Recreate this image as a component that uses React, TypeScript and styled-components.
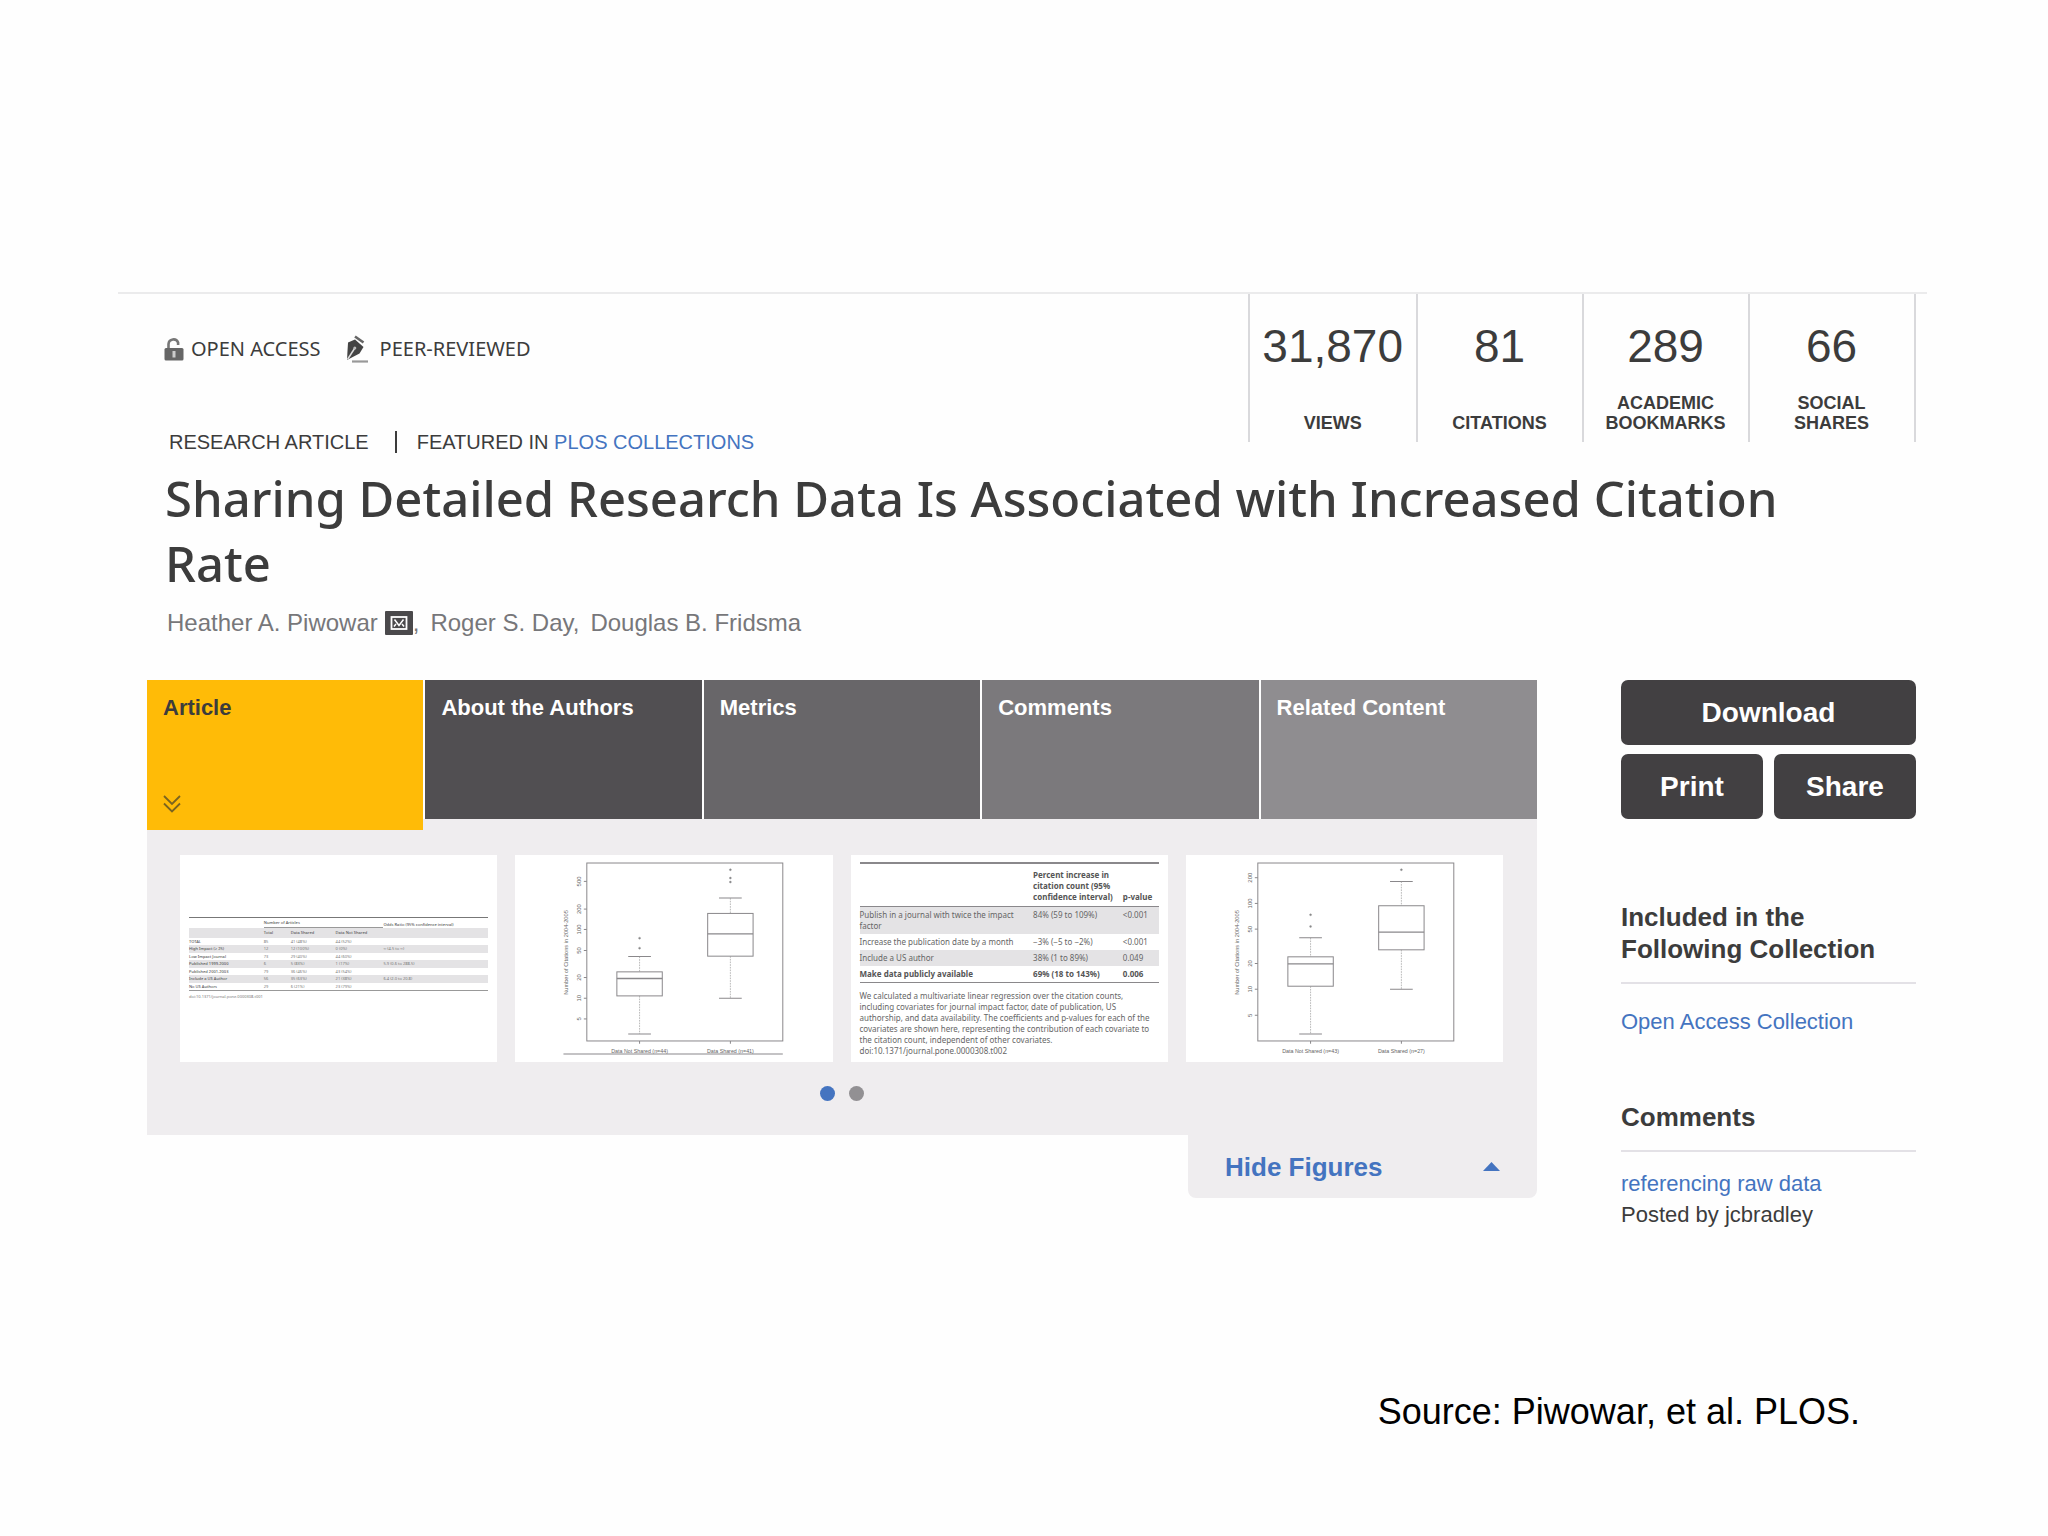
import React from "react";
import styled, { createGlobalStyle } from "styled-components";

const sans = `"Liberation Sans", Arial, sans-serif`;
const humanist = `"Noto Sans", "Open Sans", sans-serif`;
const ink = "#3c3c3c";
const blue = "#4474c0";
const panel = "#efedef";

const GlobalStyle = createGlobalStyle`
  *, *::before, *::after { box-sizing: border-box; }
  body { margin: 0; background: #fefefe; color: ${ink}; font-family: ${sans}; }
  h1, h2, p, figure, ul, dl, dd { margin: 0; padding: 0; }
`;

const Page = styled.div`
  padding: 292px 121px 80px 118px;
`;

const Header = styled.header`
  display: flex;
  justify-content: space-between;
  align-items: flex-start;
  border-top: 2px solid #ebebec;
  padding: 0 11px 0 46px;
`;

const Intro = styled.div`
  display: flex;
  flex-direction: column;
  gap: 67px;
  padding-top: 41px;
`;

const Badges = styled.ul`
  display: flex;
  gap: 24px;
  list-style: none;
  font: 20px/28px ${humanist};
`;

const Badge = styled.li`
  display: flex;
  align-items: center;
  gap: 7px;
`;

const Kicker = styled.p`
  display: flex;
  align-items: center;
  font-size: 20px;
  line-height: 24px;
  padding-left: 5px;
`;

const Divider = styled.span`
  width: 2px;
  height: 22px;
  margin: 0 20px 0 26px;
  background: ${ink};
`;

const Link = styled.a`
  color: ${blue};
  text-decoration: none;
`;

const Stats = styled.dl`
  display: flex;
  border-right: 2px solid #d9d9dc;
`;

const Stat = styled.div`
  display: flex;
  flex-direction: column-reverse;
  justify-content: space-between;
  min-width: 166px;
  height: 148px;
  padding: 24px 13px 9px 12px;
  border-left: 2px solid #d9d9dc;
  text-align: center;
`;

const StatValue = styled.dd`
  font-size: 46px;
  line-height: 56px;
`;

const StatLabel = styled.dt`
  font-weight: bold;
  font-size: 18px;
  line-height: 20px;
`;

const Title = styled.h1`
  padding: 12px 120px 0 47px;
  font: 500 49px/65px ${humanist};
`;

const Authors = styled.p`
  display: flex;
  align-items: center;
  gap: 11px;
  padding: 11px 0 0 49px;
  color: #77777a;
  font-size: 24px;
  line-height: 32px;
`;

const Author = styled.span`
  display: flex;
  align-items: center;
`;

const MailLink = styled.a`
  display: flex;
  margin-left: 7px;
`;

const Body = styled.div`
  display: grid;
  grid-template-columns: minmax(0, 1fr) 295px;
  gap: 84px;
  padding: 41px 11px 0 29px;
`;

const Tabs = styled.nav`
  display: grid;
  grid-template-columns: repeat(5, 1fr);
  gap: 2px;
  height: 139px;
`;

const Tab = styled.button<{ $fill: string; $active?: boolean }>`
  display: flex;
  flex-direction: column;
  justify-content: space-between;
  align-items: flex-start;
  height: ${(p) => (p.$active ? "150px" : "139px")};
  padding: 14px 16px 17px;
  border: 0;
  background: ${(p) => p.$fill};
  color: ${(p) => (p.$active ? ink : "#fff")};
  font: bold 22px/28px ${sans};
  cursor: pointer;
`;

const Carousel = styled.section`
  background: ${panel};
  padding: 36px 34px 34px 33px;
`;

const Figures = styled.div`
  display: grid;
  grid-template-columns: repeat(4, 1fr);
  gap: 18px;
`;

const Figure = styled.figure<{ $table?: boolean }>`
  height: 207px;
  padding: ${(p) => (p.$table ? "0 9px" : "0")};
  background: #fff;
`;

const Dots = styled.div`
  display: flex;
  justify-content: center;
  gap: 14px;
  padding: 24px 0 0;
`;

const Dot = styled.button<{ $on?: boolean }>`
  width: 15px;
  height: 15px;
  padding: 0;
  border: 0;
  border-radius: 50%;
  background: ${(p) => (p.$on ? blue : "#929093")};
`;

const HideFigures = styled.button`
  display: flex;
  justify-content: space-between;
  align-items: center;
  width: 349px;
  height: 63px;
  margin-left: auto;
  padding: 0 37px;
  border: 0;
  border-radius: 0 0 8px 8px;
  background: ${panel};
  color: ${blue};
  font: bold 26px/32px ${sans};
`;

const Sidebar = styled.aside`
  display: flex;
  flex-direction: column;
`;

const Actions = styled.div`
  display: grid;
  grid-template-columns: 1fr 1fr;
  gap: 9px 11px;
`;

const Action = styled.button<{ $wide?: boolean }>`
  grid-column: ${(p) => (p.$wide ? "1 / -1" : "auto")};
  height: 65px;
  padding: 0;
  border: 0;
  border-radius: 7px;
  background: #424042;
  color: #fff;
  font: bold 28px/32px ${sans};
`;

const SideBlock = styled.section<{ $top: number; $gap: number }>`
  padding-top: ${(p) => p.$top}px;
  font-size: 22px;
  line-height: 31px;

  h2 {
    margin-bottom: ${(p) => p.$gap}px;
    padding-bottom: 17px;
    border-bottom: 2px solid #e3e1e6;
    font-size: 26px;
    line-height: 32px;
  }
`;

const Source = styled.footer`
  padding: 160px 67px 0 0;
  color: #000;
  font-size: 36px;
  line-height: 44px;
  text-align: right;
`;

const OddsTable = styled.table`
  width: 100%;
  margin-top: 62px;
  border-collapse: collapse;
  border-top: 1px solid #777;
  border-bottom: 1px solid #999;
  color: #777;
  font: 4px/7px ${humanist};
  text-align: left;

  th, td { height: 7px; padding: 0; }
  thead th { height: 10px; color: #555; font-weight: 500; }
  thead tr:first-child th:last-child { vertical-align: bottom; }
  thead tr:last-child th, tbody tr:nth-child(even) { background: #e4e3e5; }
  tbody tr:nth-child(even) td, tbody tr:nth-child(even) th { height: 8px; }
  th[colspan] { border-bottom: 1px solid #999; }
  tbody th { font-weight: 500; color: #555; }
`;

const Doi = styled.figcaption`
  padding-top: 3px;
  color: #777;
  font: 4px/6px ${humanist};
`;

const EffectTable = styled.table`
  width: 100%;
  margin-top: 7px;
  border-collapse: collapse;
  border-top: 2px solid #8a888b;
  border-bottom: 1px solid #8a888b;
  color: #666;
  font: 8px/11px ${humanist};
  text-align: left;

  th, td { padding: 2px 0 3px; vertical-align: top; font-weight: 400; }
  thead th { padding: 5px 0 4px; vertical-align: bottom; font-weight: bold; border-bottom: 1px solid #8a888b; color: #555; }
  tbody tr:nth-child(odd) { background: #e4e3e5; }
  tbody tr:last-child > * { font-weight: bold; color: #555; }
`;

const EffectNote = styled.figcaption`
  padding-top: 7px;
  color: #666;
  font: 8px/11px ${humanist};
  white-space: nowrap;
`;

const Plot = styled.svg`
  display: block;
  width: 100%;
  height: 100%;
`;

const LockIcon = () => (
  <svg width="20" height="23" viewBox="0 0 20 23" aria-hidden="true">
    <path d="M4.500 11V6a5 5 0 0 1 9.600-1.500V7" fill="none" stroke="#777" strokeWidth="2.600" />
    <rect x="0.500" y="10" width="19" height="12.500" rx="1.500" fill="#666" />
    <rect x="8.500" y="13" width="3" height="6.500" fill="#ccc" />
  </svg>
);

const PenIcon = () => (
  <svg width="28" height="28" viewBox="0 0 28 28" aria-hidden="true">
    <path d="M2 25 3 7.500 10 4.500 18.500 12 14.500 18.500Z" fill="#444" />
    <path d="M2.500 24.500 9.500 13.500" stroke="#ddd" strokeWidth="1.500" />
    <circle cx="9.800" cy="13" r="1.500" fill="#bbb" />
    <path d="M10 1.500 18.500 7.500" stroke="#666" strokeWidth="2.600" />
    <path d="M7 26.500H23" stroke="#999" strokeWidth="2.200" />
  </svg>
);

const MailIcon = () => (
  <svg width="28" height="24" viewBox="0 0 28 24" aria-hidden="true">
    <rect width="28" height="24" rx="1" fill="#4a494b" />
    <rect x="6.500" y="6" width="15" height="12" fill="none" stroke="#fff" strokeWidth="1.800" />
    <path d="M9.500 8.500 14 14.500 18.500 8.500M9 15.500 11 13M19 15.500 17 13" fill="none" stroke="#fff" strokeWidth="1.500" />
  </svg>
);

const ChevronsIcon = () => (
  <svg width="18" height="18" viewBox="0 0 18 18" aria-hidden="true">
    <path d="M1 1 9 9 17 1M1 8.500 9 16.500 17 8.500" fill="none" stroke="#7a6420" strokeWidth="1.800" />
  </svg>
);

const UpIcon = () => (
  <svg width="17" height="9" viewBox="0 0 17 9" aria-hidden="true">
    <path d="M0 9 8.500 0 17 9Z" fill={blue} />
  </svg>
);

type Box = { x: number; top: number; q3: number; median: number; q1: number; low: number; dots: number[]; label: string };
type PlotData = { axis: string; ticks: [string, number][]; boxes: Box[]; underline?: boolean };

const plotA: PlotData = {
  axis: "Number of Citations in 2004-2005",
  ticks: [["500", 110], ["200", 193], ["100", 254], ["50", 317], ["20", 398], ["10", 460], ["5", 522]],
  boxes: [
    { x: 405, top: 335, q3: 381, median: 401, q1: 453, low: 567, dots: [280, 310], label: "Data Not Shared (n=44)" },
    { x: 677, top: 160, q3: 206, median: 267, q1: 334, low: 460, dots: [75, 100, 112], label: "Data Shared (n=41)" },
  ],
  underline: true,
};

const plotB: PlotData = {
  axis: "Number of Citations in 2004-2005",
  ticks: [["200", 99], ["100", 176], ["50", 253], ["20", 356], ["10", 433], ["5", 511]],
  boxes: [
    { x: 405, top: 279, q3: 336, median: 357, q1: 424, low: 567, dots: [210, 245], label: "Data Not Shared (n=43)" },
    { x: 677, top: 110, q3: 183, median: 262, q1: 315, low: 433, dots: [75], label: "Data Shared (n=27)" },
  ],
};

const BoxPlot = ({ data }: { data: PlotData }) => (
  <Plot viewBox="32 31 950 620" role="img" aria-label={data.axis} stroke="#8a888b" strokeWidth="3" fill="none">
    <rect x="247" y="55" width="587" height="533" />
    {data.ticks.map(([label, y]) => (
      <g key={label}>
        <path d={`M238 ${y}H247`} />
        <text transform={`translate(229 ${y}) rotate(-90)`} textAnchor="middle" fontFamily={sans} fontSize="18" fill="#666" stroke="none">{label}</text>
      </g>
    ))}
    <text transform="translate(191 323) rotate(-90)" textAnchor="middle" fontFamily={sans} fontSize="17" fill="#666" stroke="none">{data.axis}</text>
    {data.boxes.map((b) => (
      <g key={b.x}>
        <rect x={b.x - 68} y={b.q3} width="136" height={b.q1 - b.q3} />
        <path d={`M${b.x - 68} ${b.median}H${b.x + 68}`} strokeWidth="4" />
        <path d={`M${b.x - 34} ${b.top}H${b.x + 34}M${b.x - 34} ${b.low}H${b.x + 34}M${b.x} 588V596`} />
        <path d={`M${b.x} ${b.top}V${b.q3}M${b.x} ${b.q1}V${b.low}`} stroke="#999" strokeWidth="2" strokeDasharray="5 3" />
        {b.dots.map((y) => <circle key={y} cx={b.x} cy={y} r="3" fill="#888" strokeWidth="1" />)}
        <text x={b.x} y="624" textAnchor="middle" fontFamily={sans} fontSize="16" fill="#666" stroke="none">{b.label}</text>
      </g>
    ))}
    {data.underline && <path d="M177 627H834" />}
  </Plot>
);

const stats = [
  ["31,870", "VIEWS"],
  ["81", "CITATIONS"],
  ["289", "ACADEMIC BOOKMARKS"],
  ["66", "SOCIAL SHARES"],
];

const tabs = [
  ["Article", "#ffbb07"],
  ["About the Authors", "#514f52"],
  ["Metrics", "#686669"],
  ["Comments", "#7b797c"],
  ["Related Content", "#8f8d90"],
];

const odds = [
  ["TOTAL", "85", "41 (48%)", "44 (52%)", ""],
  ["High Impact (≥ 25)", "12", "12 (100%)", "0 (0%)", "∞ (4.5 to ∞)"],
  ["Low Impact Journal", "73", "29 (40%)", "44 (60%)", ""],
  ["Published 1999-2000", "6", "5 (83%)", "1 (17%)", "5.9 (0.6 to 288.5)"],
  ["Published 2001-2003", "79", "36 (46%)", "43 (54%)", ""],
  ["Include a US Author", "56", "35 (63%)", "21 (38%)", "6.4 (2.0 to 20.8)"],
  ["No US Authors", "29", "6 (21%)", "23 (79%)", ""],
];

const effects = [
  ["Publish in a journal with twice the impact factor", "84% (59 to 109%)", "<0.001"],
  ["Increase the publication date by a month", "−3% (−5 to −2%)", "<0.001"],
  ["Include a US author", "38% (1 to 89%)", "0.049"],
  ["Make data publicly available", "69% (18 to 143%)", "0.006"],
];

export default function App() {
  return (
    <Page>
      <GlobalStyle />
      <Header>
        <Intro>
          <Badges>
            <Badge><LockIcon />OPEN ACCESS</Badge>
            <Badge><PenIcon />PEER-REVIEWED</Badge>
          </Badges>
          <Kicker>
            RESEARCH ARTICLE
            <Divider />
            <span>FEATURED IN <Link href="#collections">PLOS COLLECTIONS</Link></span>
          </Kicker>
        </Intro>
        <Stats>
          {stats.map(([value, label]) => (
            <Stat key={label}>
              <StatLabel>{label.split(" ").map((w) => <div key={w}>{w}</div>)}</StatLabel>
              <StatValue>{value}</StatValue>
            </Stat>
          ))}
        </Stats>
      </Header>
      <Title>Sharing Detailed Research Data Is Associated with Increased Citation Rate</Title>
      <Authors>
        <Author>Heather A. Piwowar<MailLink href="#mail" aria-label="Email the author"><MailIcon /></MailLink>,</Author>
        <Author>Roger S. Day,</Author>
        <Author>Douglas B. Fridsma</Author>
      </Authors>
      <Body>
        <main>
          <Tabs>
            {tabs.map(([label, fill], i) => (
              <Tab key={label} $fill={fill} $active={i === 0}>
                {label}
                {i === 0 && <ChevronsIcon />}
              </Tab>
            ))}
          </Tabs>
          <Carousel>
            <Figures>
              <Figure $table>
                <OddsTable>
                  <colgroup><col width="25%" /><col width="9%" /><col width="15%" /><col width="16%" /><col width="35%" /></colgroup>
                  <thead>
                    <tr><th /><th colSpan={3}>Number of Articles</th><th>Odds Ratio (95% confidence interval)</th></tr>
                    <tr><th /><th>Total</th><th>Data Shared</th><th>Data Not Shared</th><th /></tr>
                  </thead>
                  <tbody>
                    {odds.map(([head, ...cells]) => (
                      <tr key={head}><th>{head}</th>{cells.map((c, i) => <td key={i}>{c}</td>)}</tr>
                    ))}
                  </tbody>
                </OddsTable>
                <Doi>doi:10.1371/journal.pone.0000308.t001</Doi>
              </Figure>
              <Figure><BoxPlot data={plotA} /></Figure>
              <Figure $table>
                <EffectTable>
                  <colgroup><col width="58%" /><col width="30%" /><col width="12%" /></colgroup>
                  <thead>
                    <tr><th /><th>Percent increase in<br />citation count (95%<br />confidence interval)</th><th>p-value</th></tr>
                  </thead>
                  <tbody>
                    {effects.map(([head, ...cells]) => (
                      <tr key={head}><th>{head}</th>{cells.map((c) => <td key={c}>{c}</td>)}</tr>
                    ))}
                  </tbody>
                </EffectTable>
                <EffectNote>
                  We calculated a multivariate linear regression over the citation counts,<br />
                  including covariates for journal impact factor, date of publication, US<br />
                  authorship, and data availability. The coefficients and p-values for each of the<br />
                  covariates are shown here, representing the contribution of each covariate to<br />
                  the citation count, independent of other covariates.<br />
                  doi:10.1371/journal.pone.0000308.t002
                </EffectNote>
              </Figure>
              <Figure><BoxPlot data={plotB} /></Figure>
            </Figures>
            <Dots>
              <Dot $on aria-label="Figures page 1" />
              <Dot aria-label="Figures page 2" />
            </Dots>
          </Carousel>
          <HideFigures>Hide Figures<UpIcon /></HideFigures>
        </main>
        <Sidebar>
          <Actions>
            <Action $wide>Download</Action>
            <Action>Print</Action>
            <Action>Share</Action>
          </Actions>
          <SideBlock $top={82} $gap={22}>
            <h2>Included in the Following Collection</h2>
            <Link href="#open-access">Open Access Collection</Link>
          </SideBlock>
          <SideBlock $top={64} $gap={16}>
            <h2>Comments</h2>
            <Link href="#raw-data">referencing raw data</Link>
            <p>Posted by jcbradley</p>
          </SideBlock>
        </Sidebar>
      </Body>
      <Source>Source: Piwowar, et al. PLOS.</Source>
    </Page>
  );
}
